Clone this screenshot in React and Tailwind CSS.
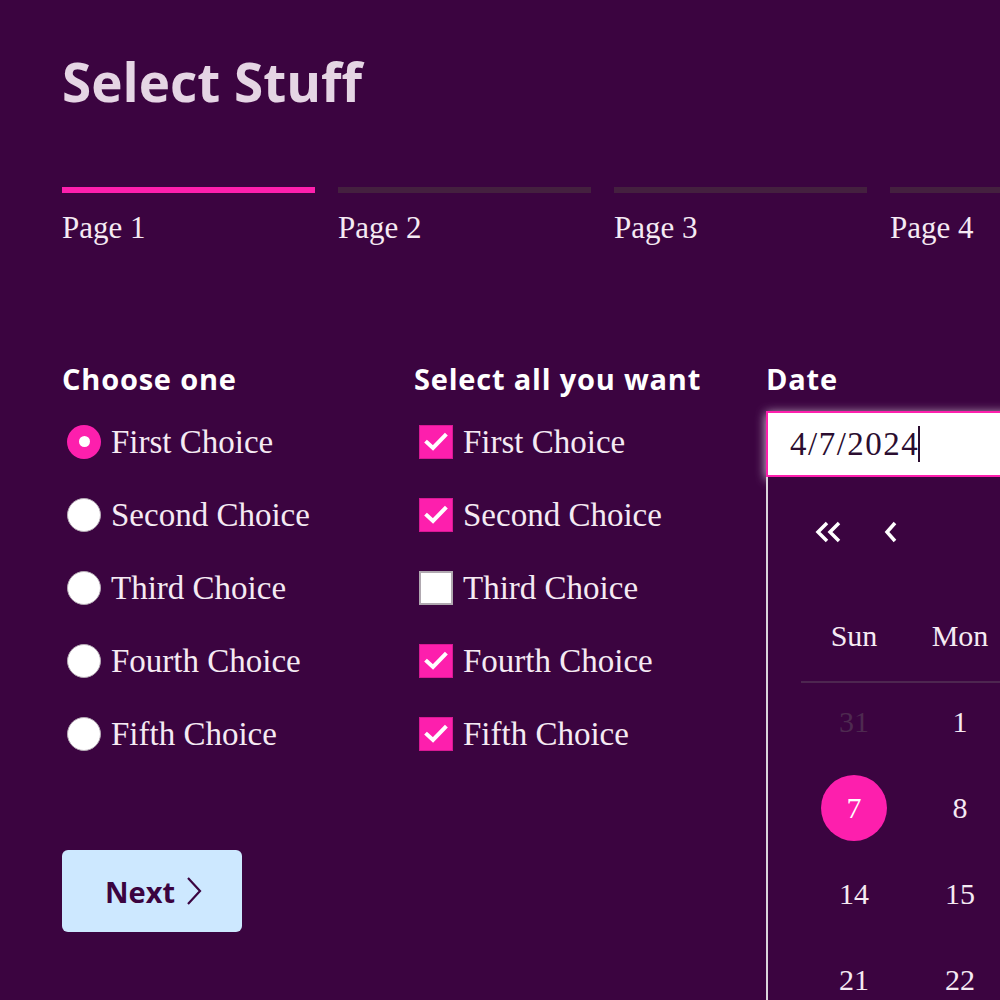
import React from "react";

const serif = { fontFamily: '"Liberation Serif", "Times New Roman", serif' };
const sans = { fontFamily: '"Open Sans", Lato, sans-serif' };

function Radio({ checked, label }) {
  return (
    <div className="flex h-[73px] items-center">
      {checked ? (
        <span className="ml-[5px] flex h-[34px] w-[34px] items-center justify-center rounded-full bg-[#fd1fad]">
          <span className="h-[11px] w-[11px] rounded-full bg-white" />
        </span>
      ) : (
        <span className="ml-[5px] h-[34px] w-[34px] rounded-full border border-[#b4a9b4] bg-white" />
      )}
      <span className="ml-[10px] text-[33px] leading-[40px] text-[#f5eaf3]" style={serif}>
        {label}
      </span>
    </div>
  );
}

function Check({ checked, label }) {
  return (
    <div className="flex h-[73px] items-center">
      {checked ? (
        <span className="ml-[5px] flex h-[34px] w-[34px] items-center justify-center border border-[#d81994] bg-[#fd1fad]">
          <svg width="26" height="26" viewBox="0 0 26 26">
            <path d="M4 13.5 L10 19 L22 6.5" fill="none" stroke="white" strokeWidth="4" strokeLinecap="square" />
          </svg>
        </span>
      ) : (
        <span className="ml-[5px] h-[34px] w-[34px] border-2 border-[#b0a8b0] bg-white" />
      )}
      <span className="ml-[10px] text-[33px] leading-[40px] text-[#f5eaf3]" style={serif}>
        {label}
      </span>
    </div>
  );
}

const choices = ["First Choice", "Second Choice", "Third Choice", "Fourth Choice", "Fifth Choice"];
const checks = [true, true, false, true, true];
const weekdays = ["Sun", "Mon", "Tue", "Wed", "Thu", "Fri", "Sat"];

const weeks = [
  [{ d: 31, dim: true }, 1, 2, 3, 4, 5, 6],
  [7, 8, 9, 10, 11, 12, 13],
  [14, 15, 16, 17, 18, 19, 20],
  [21, 22, 23, 24, 25, 26, 27],
  [28, 29, 30, { d: 1, dim: true }, { d: 2, dim: true }, { d: 3, dim: true }, { d: 4, dim: true }],
];

function DoubleLeft() {
  return (
    <svg width="26" height="24" viewBox="0 0 26 24">
      <path d="M12 3 L3 12 L12 21" fill="none" stroke="white" strokeWidth="3.5" />
      <path d="M24 3 L15 12 L24 21" fill="none" stroke="white" strokeWidth="3.5" />
    </svg>
  );
}

function SingleLeft() {
  return (
    <svg width="14" height="24" viewBox="0 0 14 24">
      <path d="M11 3 L3 12 L11 21" fill="none" stroke="white" strokeWidth="3.5" />
    </svg>
  );
}

export default function App() {
  return (
    <div className="relative h-[1000px] w-[1000px] overflow-hidden bg-[#3b0440] pl-[62px]">
      <h1
        className="mt-[55px] h-[53px] whitespace-nowrap text-[53px] font-bold leading-none text-[#e5d5e4]"
        style={sans}
      >
        Select Stuff
      </h1>

      <div className="mt-[79px] flex gap-[23px]">
        {["Page 1", "Page 2", "Page 3", "Page 4", "Page 5"].map((p, i) => (
          <div key={p} className="w-[253px] shrink-0">
            <div className={`h-[6px] ${i === 0 ? "bg-[#fd1fad]" : "bg-[#44203f]"}`} />
            <div className="mt-[17px] text-[31px] leading-[36px] text-[#f5eaf3]" style={serif}>
              {p}
            </div>
          </div>
        ))}
      </div>

      <div className="mt-[116px] flex">
        <div className="w-[352px] shrink-0">
          <h2 className="h-[34px] whitespace-nowrap text-[29px] font-bold leading-[34px] tracking-[0.8px] text-white" style={sans}>
            Choose one
          </h2>
          <div className="mt-[9px]">
            {choices.map((c, i) => (
              <Radio key={c} label={c} checked={i === 0} />
            ))}
          </div>
          <button
            className="mt-[80px] flex h-[82px] w-[180px] items-center justify-center gap-[10px] rounded-[6px] bg-[#cde8ff] pl-[4px]"
            style={sans}
          >
            <span className="text-[29px] font-bold leading-none text-[#3b0440]">Next</span>
            <svg width="18" height="30" viewBox="0 0 18 30">
              <path d="M3 2 L15 15 L3 28" fill="none" stroke="#3b0440" strokeWidth="2.2" />
            </svg>
          </button>
        </div>

        <div className="w-[352px] shrink-0">
          <h2 className="h-[34px] whitespace-nowrap text-[29px] font-bold leading-[34px] tracking-[0.8px] text-white" style={sans}>
            Select all you want
          </h2>
          <div className="mt-[9px]">
            {choices.map((c, i) => (
              <Check key={c} label={c} checked={checks[i]} />
            ))}
          </div>
        </div>

        <div className="relative w-[810px] shrink-0">
          <h2 className="h-[34px] text-[29px] font-bold leading-[34px] tracking-[0.8px] text-white" style={sans}>
            Date
          </h2>
          <div className="mt-[15px] flex h-[66px] w-[810px] items-center border-2 border-[#fd1fad] bg-white pl-[22px] shadow-[0_2px_10px_rgba(235,225,235,0.9)]">
            <span className="text-[33px] leading-none tracking-[1.5px] text-[#2b0d30]" style={serif}>
              4/7/2024
            </span>
            <span className="-ml-[1px] h-[36px] w-[2px] bg-[#2b0d30]" />
          </div>

          <div className="absolute left-0 top-[115px] w-[810px] border-l-2 border-[#d9d4da] bg-[#3b0440] pb-[20px] pl-[33px] pt-[35px]">
            <div className="flex h-[40px] items-center">
              <span className="ml-[14px] flex">
                <DoubleLeft />
              </span>
              <span className="ml-[43px] flex">
                <SingleLeft />
              </span>
              <span className="ml-[210px] text-[30px] text-white" style={serif}>
                April 2024
              </span>
            </div>
            <div className="mt-[54px] grid h-[60px] grid-cols-[repeat(7,106px)] items-center">
              {weekdays.map((w) => (
                <div key={w} className="text-center text-[30px] leading-none text-[#f5eaf3]" style={serif}>
                  {w}
                </div>
              ))}
            </div>
            <div className="mt-[15px] w-[742px] border-t-2 border-[#4d2650]" />
            {weeks.map((wk, r) => (
              <div key={r} className={`grid h-[86px] grid-cols-[repeat(7,106px)] items-center ${r === 0 ? "-mt-[4px]" : ""}`}>
                {wk.map((d, c) => {
                  const val = typeof d === "object" ? d.d : d;
                  const dim = typeof d === "object";
                  const sel = r === 1 && c === 0;
                  return (
                    <div key={c} className="flex justify-center">
                      <span
                        className={`flex h-[66px] w-[66px] items-center justify-center rounded-full text-[30px] leading-none ${
                          sel ? "bg-[#fd1fad] text-white" : dim ? "text-[#4e2a50]" : "text-[#f5eaf3]"
                        }`}
                        style={serif}
                      >
                        {val}
                      </span>
                    </div>
                  );
                })}
              </div>
            ))}
          </div>
        </div>
      </div>
    </div>
  );
}
